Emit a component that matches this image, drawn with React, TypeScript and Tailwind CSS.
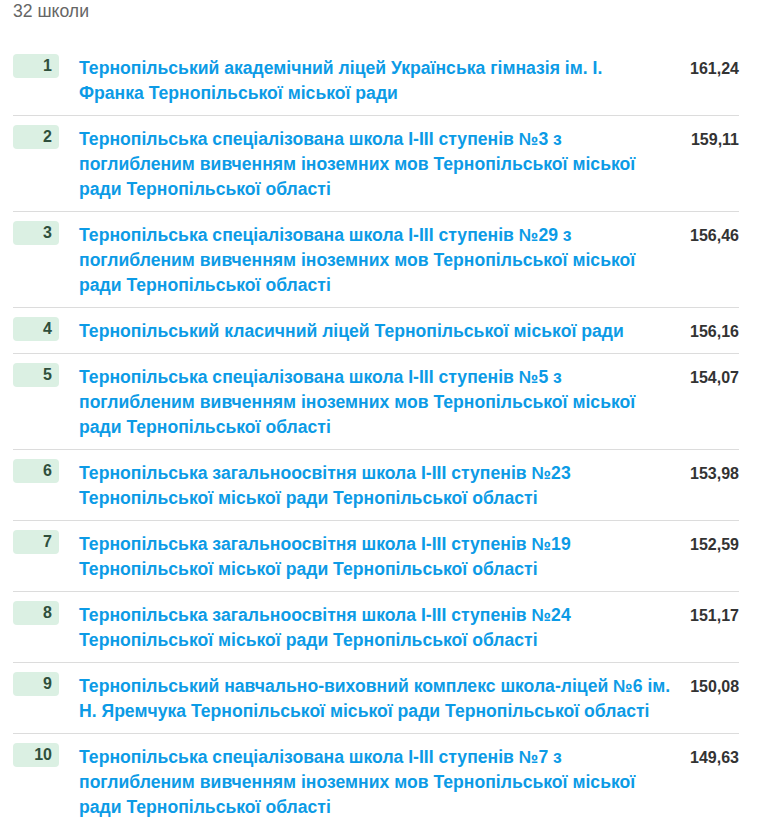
const schools = [
  { n: 1, lines: ["Тернопільський академічний ліцей Українська гімназія ім. І.", "Франка Тернопільської міської ради"], score: "161,24" },
  { n: 2, lines: ["Тернопільська спеціалізована школа І-ІІІ ступенів №3 з", "поглибленим вивченням іноземних мов Тернопільської міської", "ради Тернопільської області"], score: "159,11" },
  { n: 3, lines: ["Тернопільська спеціалізована школа І-ІІІ ступенів №29 з", "поглибленим вивченням іноземних мов Тернопільської міської", "ради Тернопільської області"], score: "156,46" },
  { n: 4, lines: ["Тернопільський класичний ліцей Тернопільської міської ради"], score: "156,16" },
  { n: 5, lines: ["Тернопільська спеціалізована школа І-ІІІ ступенів №5 з", "поглибленим вивченням іноземних мов Тернопільської міської", "ради Тернопільської області"], score: "154,07" },
  { n: 6, lines: ["Тернопільська загальноосвітня школа І-ІІІ ступенів №23", "Тернопільської міської ради Тернопільської області"], score: "153,98" },
  { n: 7, lines: ["Тернопільська загальноосвітня школа І-ІІІ ступенів №19", "Тернопільської міської ради Тернопільської області"], score: "152,59" },
  { n: 8, lines: ["Тернопільська загальноосвітня школа І-ІІІ ступенів №24", "Тернопільської міської ради Тернопільської області"], score: "151,17" },
  { n: 9, lines: ["Тернопільський навчально-виховний комплекс школа-ліцей №6 ім.", "Н. Яремчука Тернопільської міської ради Тернопільської області"], score: "150,08" },
  { n: 10, lines: ["Тернопільська спеціалізована школа І-ІІІ ступенів №7 з", "поглибленим вивченням іноземних мов Тернопільської міської", "ради Тернопільської області"], score: "149,63" },
];

export default function App() {
  return (
    <div className="bg-white min-h-screen px-[13px] font-['Liberation_Sans',Arial,sans-serif]">
      <div className="text-[17.6px] leading-[22px] text-[#666]">32 школи</div>

      <div className="w-[726px] mt-[23px]">
        {schools.map((s, i) => (
          <div
            key={s.n}
            className={
              "grid grid-cols-[46px_1fr_auto] gap-x-[20px] pt-[11px] pb-[9px] " +
              (i < schools.length - 1 ? "border-b border-[#dcdcdc]" : "")
            }
          >
            <div className="h-[24px] mt-[-2px] rounded-[4px] bg-[#dbf0e3] text-right pr-[7px] text-[#2f4f3c] font-bold text-[16px] leading-[24px]">
              {s.n}
            </div>
            <a href="#" className="text-[#0c9be6] font-bold text-[17.6px] leading-[25px]">
              {s.lines.map((l) => (
                <span key={l} className="block whitespace-nowrap">
                  {l}
                </span>
              ))}
            </a>
            <div className="text-right text-[#333] font-bold text-[16px] leading-[25px]">{s.score}</div>
          </div>
        ))}
      </div>
    </div>
  );
}
